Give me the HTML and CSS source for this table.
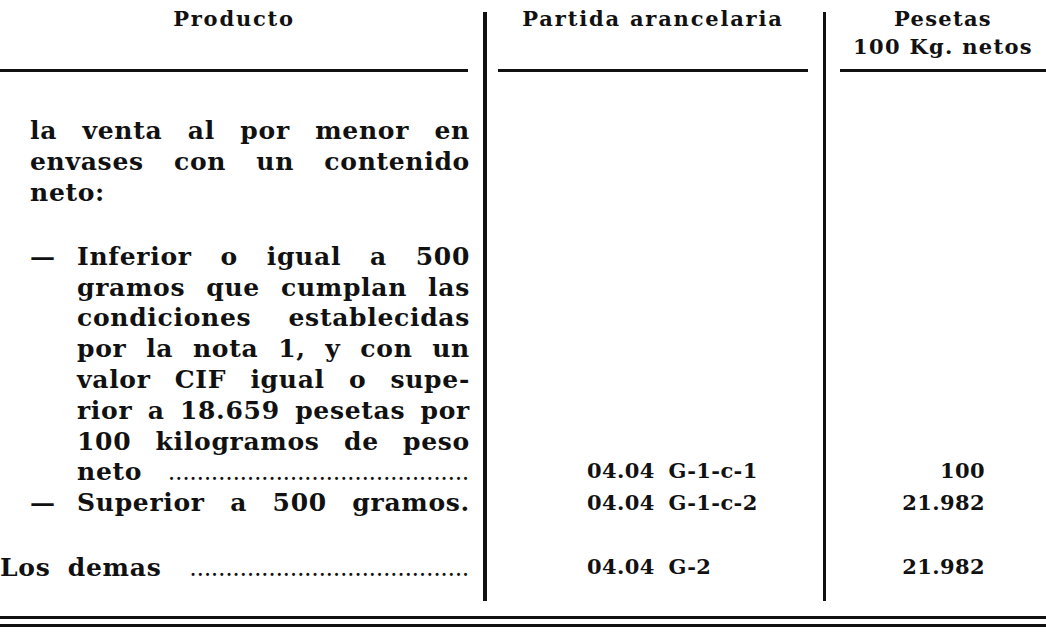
FILE: index.html
```html
<!DOCTYPE html>
<html lang="es">
<head>
<meta charset="utf-8">
<title>Tabla</title>
<link rel="stylesheet" href="styles.css">
</head>
<body>
<div class="page">
  <div class="table">
    <div class="head head-prod"><div class="htext">Producto</div></div>
    <div class="rule rule-a"></div>
    <div class="head head-part"><div class="htext">Partida arancelaria</div></div>
    <div class="rule rule-b"></div>
    <div class="head head-pes"><div class="htext">Pesetas<br>100 Kg. netos</div></div>

    <div class="prod intro">
      <span class="jl">la venta al por menor en</span>
      <span class="jl">envases con un contenido</span>
      <span class="ln">neto:</span>
    </div>

    <div class="prod item r-inf">
      <span class="dash">—</span>
      <div class="itext">
        <span class="jl">Inferior o igual a 500</span>
        <span class="jl">gramos que cumplan las</span>
        <span class="jl">condiciones establecidas</span>
        <span class="jl">por la nota 1, y con un</span>
        <span class="jl">valor CIF igual o supe-</span>
        <span class="jl">rior a 18.659 pesetas por</span>
        <span class="jl">100 kilogramos de peso</span>
        <span class="leader"><span class="lw">neto</span><span class="dots">..........................................</span></span>
      </div>
    </div>
    <div class="code r-inf">04.04 G-1-c-1</div>
    <div class="val r-inf">100</div>

    <div class="prod item r-sup">
      <span class="dash">—</span>
      <div class="itext">
        <span class="jl">Superior a 500 gramos.</span>
      </div>
    </div>
    <div class="code r-sup">04.04 G-1-c-2</div>
    <div class="val r-sup">21.982</div>

    <div class="prod other r-dem">
      <span class="leader"><span class="lw">Los demas</span><span class="dots">.......................................</span></span>
    </div>
    <div class="code r-dem">04.04 G-2</div>
    <div class="val r-dem">21.982</div>

    <div class="spacer"></div>
  </div>
  <div class="double"></div>
</div>
</body>
</html>
```

FILE: styles.css
```css
html, body {
  margin: 0;
  padding: 0;
  background: #fff;
}

.page {
  width: 1046px;
  height: 642px;
  color: #111;
  font-family: "DejaVu Serif", "Liberation Serif", serif;
  font-weight: bold;
}

.table {
  display: grid;
  grid-template-columns: 470px 28px 312px 30px 206px;
  grid-template-rows: 72px auto auto auto auto 18px;
}

.head {
  grid-row: 1;
  border-bottom: 3px solid #111;
  box-sizing: border-box;
  height: 72px;
  padding-top: 5px;
  text-align: center;
  font-size: 21px;
  line-height: 28px;
  letter-spacing: 1.3px;
}
.head-prod { grid-column: 1; margin-right: 2px; letter-spacing: 1.8px; }
.head-part { grid-column: 3; margin-right: 2px; letter-spacing: 1.8px; }
.head-pes { grid-column: 5; }

.rule {
  grid-row: 1 / -1;
  background: #111;
  margin-top: 12px;
}
.rule-a { grid-column: 2; width: 4px; margin-left: 13px; }
.rule-b { grid-column: 4; width: 3px; margin-left: 13px; }

.prod {
  grid-column: 1;
  font-size: 25px;
  line-height: 30.8px;
  letter-spacing: 0.7px;
}
.jl, .ln, .leader {
  display: block;
  white-space: nowrap;
}
.jl {
  text-align: justify;
  text-align-last: justify;
  white-space: normal;
}

.intro {
  grid-row: 2;
  padding: 44px 0 0 30px;
}
.item {
  display: flex;
  padding-left: 30px;
}
.dash {
  flex: 0 0 47px;
}
.itext {
  flex: 1;
  min-width: 0;
}
.r-inf { grid-row: 3; }
.r-inf.prod { padding-top: 33.5px; }
.r-sup { grid-row: 4; }
.r-dem { grid-row: 5; }
.r-dem.prod { padding-top: 32.5px; }

.leader {
  display: flex;
  align-items: baseline;
  justify-content: space-between;
  height: 30.8px;
}
.lw {
  flex: none;
  word-spacing: 8px;
}
.dots {
  flex: none;
  font-size: 16px;
  line-height: 16px;
  letter-spacing: 1.6px;
}

.code, .val {
  align-self: end;
  font-size: 21px;
  line-height: 30.8px;
  margin-bottom: 1px;
  letter-spacing: 0.4px;
  white-space: nowrap;
}
.code {
  grid-column: 3;
  padding-left: 89px;
  word-spacing: 6px;
}
.val {
  grid-column: 5;
  text-align: right;
  padding-right: 61px;
}

.spacer { grid-column: 1; grid-row: 6; }

.double {
  margin-top: 15px;
  height: 5px;
  border-top: 3px solid #111;
  border-bottom: 3px solid #111;
}
```
